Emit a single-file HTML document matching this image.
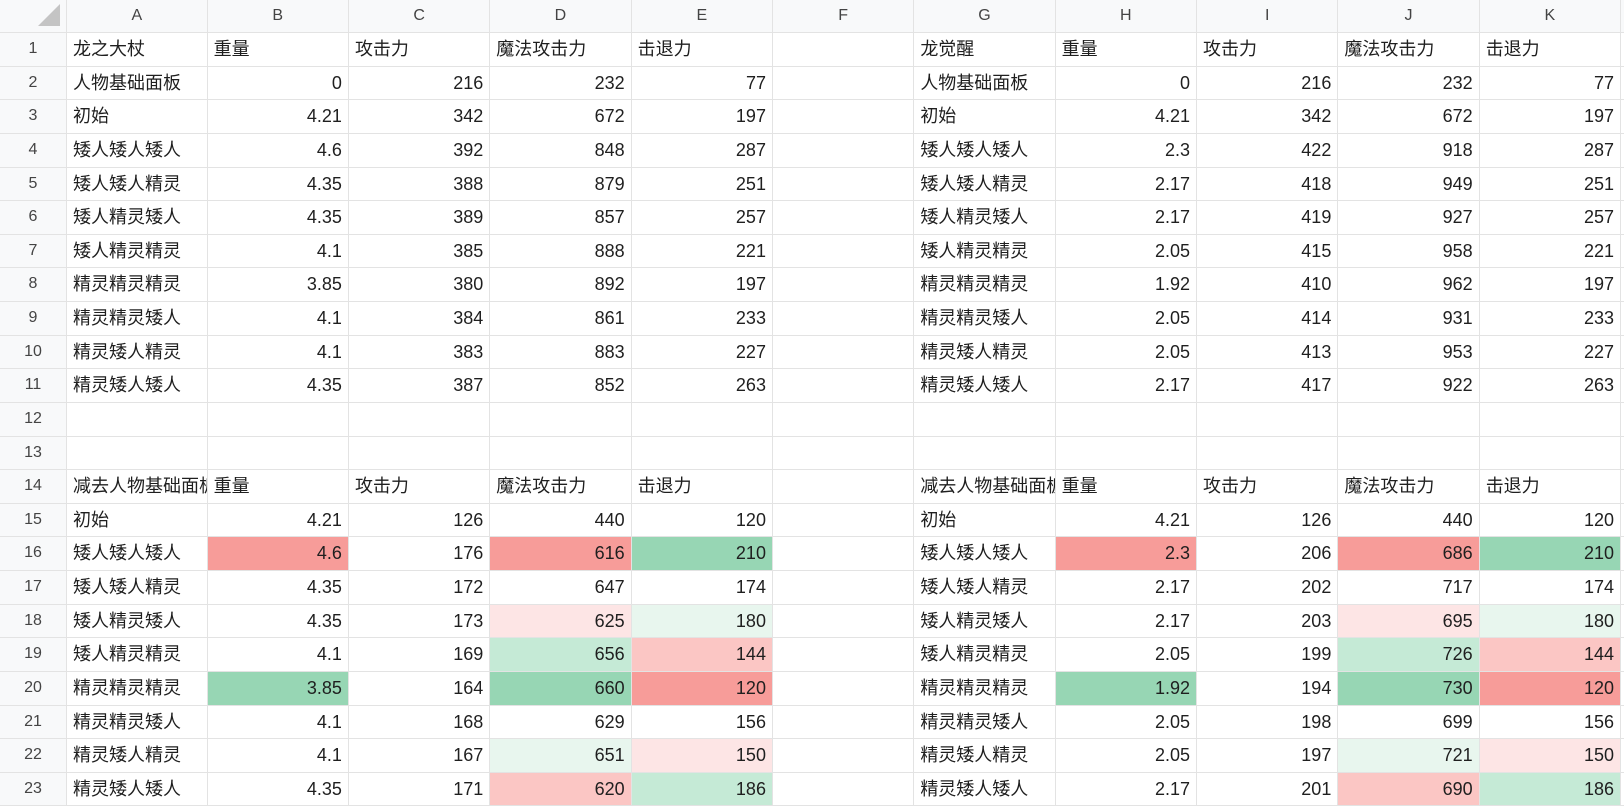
<!DOCTYPE html>
<html><head><meta charset="utf-8"><style>
*{box-sizing:border-box;margin:0;padding:0}
body{width:1624px;height:807px;overflow:hidden;background:#fff;font-family:"Liberation Sans","Noto Sans CJK SC",sans-serif;color:#1f1f1f;position:relative}
.row{position:absolute;left:0;width:1624px;height:33.63px;display:flex}
.row>div{height:100%;border-right:1px solid #e3e3e3;border-bottom:1px solid #e3e3e3;overflow:hidden;white-space:nowrap;font-size:18px;line-height:32px;padding:0 6px;flex:none}
.row>div:nth-child(1){width:67px;background:#f8f9fa;text-align:center;font-size:16px;color:#444;padding:0}
.row>div:nth-child(2){width:140.6px}
.row>div:nth-child(n+3){width:141.35px}
.row>div:last-child{flex:1;border-right:none}
.r{text-align:right}
.hd>div{background:#f8f9fa;text-align:center;font-size:16px;color:#444;line-height:32px}
.R{background:#f79c99}.r2{background:#fbc6c4}.r3{background:#fde5e5}
.G{background:#97d6b4}.g2{background:#c5ead6}.g3{background:#e8f6ee}
.corner{position:relative}
.corner:after{content:"";position:absolute;right:6px;bottom:6px;width:0;height:0;border-left:22px solid transparent;border-bottom:22px solid #c4c4c4}
</style></head><body>
<div class="row hd" style="top:0;height:33px"><div class="corner"></div><div>A</div><div>B</div><div>C</div><div>D</div><div>E</div><div>F</div><div>G</div><div>H</div><div>I</div><div>J</div><div>K</div><div></div></div>

<div class="row" style="top:33px"><div>1</div><div>龙之大杖</div><div>重量</div><div>攻击力</div><div>魔法攻击力</div><div>击退力</div><div></div><div>龙觉醒</div><div>重量</div><div>攻击力</div><div>魔法攻击力</div><div>击退力</div><div></div></div>
<div class="row" style="top:66.63px"><div>2</div><div>人物基础面板</div><div class="r">0</div><div class="r">216</div><div class="r">232</div><div class="r">77</div><div></div><div>人物基础面板</div><div class="r">0</div><div class="r">216</div><div class="r">232</div><div class="r">77</div><div></div></div>
<div class="row" style="top:100.26px"><div>3</div><div>初始</div><div class="r">4.21</div><div class="r">342</div><div class="r">672</div><div class="r">197</div><div></div><div>初始</div><div class="r">4.21</div><div class="r">342</div><div class="r">672</div><div class="r">197</div><div></div></div>
<div class="row" style="top:133.89px"><div>4</div><div>矮人矮人矮人</div><div class="r">4.6</div><div class="r">392</div><div class="r">848</div><div class="r">287</div><div></div><div>矮人矮人矮人</div><div class="r">2.3</div><div class="r">422</div><div class="r">918</div><div class="r">287</div><div></div></div>
<div class="row" style="top:167.52px"><div>5</div><div>矮人矮人精灵</div><div class="r">4.35</div><div class="r">388</div><div class="r">879</div><div class="r">251</div><div></div><div>矮人矮人精灵</div><div class="r">2.17</div><div class="r">418</div><div class="r">949</div><div class="r">251</div><div></div></div>
<div class="row" style="top:201.15px"><div>6</div><div>矮人精灵矮人</div><div class="r">4.35</div><div class="r">389</div><div class="r">857</div><div class="r">257</div><div></div><div>矮人精灵矮人</div><div class="r">2.17</div><div class="r">419</div><div class="r">927</div><div class="r">257</div><div></div></div>
<div class="row" style="top:234.78px"><div>7</div><div>矮人精灵精灵</div><div class="r">4.1</div><div class="r">385</div><div class="r">888</div><div class="r">221</div><div></div><div>矮人精灵精灵</div><div class="r">2.05</div><div class="r">415</div><div class="r">958</div><div class="r">221</div><div></div></div>
<div class="row" style="top:268.41px"><div>8</div><div>精灵精灵精灵</div><div class="r">3.85</div><div class="r">380</div><div class="r">892</div><div class="r">197</div><div></div><div>精灵精灵精灵</div><div class="r">1.92</div><div class="r">410</div><div class="r">962</div><div class="r">197</div><div></div></div>
<div class="row" style="top:302.04px"><div>9</div><div>精灵精灵矮人</div><div class="r">4.1</div><div class="r">384</div><div class="r">861</div><div class="r">233</div><div></div><div>精灵精灵矮人</div><div class="r">2.05</div><div class="r">414</div><div class="r">931</div><div class="r">233</div><div></div></div>
<div class="row" style="top:335.67px"><div>10</div><div>精灵矮人精灵</div><div class="r">4.1</div><div class="r">383</div><div class="r">883</div><div class="r">227</div><div></div><div>精灵矮人精灵</div><div class="r">2.05</div><div class="r">413</div><div class="r">953</div><div class="r">227</div><div></div></div>
<div class="row" style="top:369.3px"><div>11</div><div>精灵矮人矮人</div><div class="r">4.35</div><div class="r">387</div><div class="r">852</div><div class="r">263</div><div></div><div>精灵矮人矮人</div><div class="r">2.17</div><div class="r">417</div><div class="r">922</div><div class="r">263</div><div></div></div>
<div class="row" style="top:402.93px"><div>12</div><div></div><div></div><div></div><div></div><div></div><div></div><div></div><div></div><div></div><div></div><div></div><div></div></div>
<div class="row" style="top:436.56px"><div>13</div><div></div><div></div><div></div><div></div><div></div><div></div><div></div><div></div><div></div><div></div><div></div><div></div></div>
<div class="row" style="top:470.19px"><div>14</div><div>减去人物基础面板</div><div>重量</div><div>攻击力</div><div>魔法攻击力</div><div>击退力</div><div></div><div>减去人物基础面板</div><div>重量</div><div>攻击力</div><div>魔法攻击力</div><div>击退力</div><div></div></div>
<div class="row" style="top:503.82px"><div>15</div><div>初始</div><div class="r">4.21</div><div class="r">126</div><div class="r">440</div><div class="r">120</div><div></div><div>初始</div><div class="r">4.21</div><div class="r">126</div><div class="r">440</div><div class="r">120</div><div></div></div>
<div class="row" style="top:537.45px"><div>16</div><div>矮人矮人矮人</div><div class="r R">4.6</div><div class="r">176</div><div class="r R">616</div><div class="r G">210</div><div></div><div>矮人矮人矮人</div><div class="r R">2.3</div><div class="r">206</div><div class="r R">686</div><div class="r G">210</div><div></div></div>
<div class="row" style="top:571.08px"><div>17</div><div>矮人矮人精灵</div><div class="r">4.35</div><div class="r">172</div><div class="r">647</div><div class="r">174</div><div></div><div>矮人矮人精灵</div><div class="r">2.17</div><div class="r">202</div><div class="r">717</div><div class="r">174</div><div></div></div>
<div class="row" style="top:604.71px"><div>18</div><div>矮人精灵矮人</div><div class="r">4.35</div><div class="r">173</div><div class="r r3">625</div><div class="r g3">180</div><div></div><div>矮人精灵矮人</div><div class="r">2.17</div><div class="r">203</div><div class="r r3">695</div><div class="r g3">180</div><div></div></div>
<div class="row" style="top:638.34px"><div>19</div><div>矮人精灵精灵</div><div class="r">4.1</div><div class="r">169</div><div class="r g2">656</div><div class="r r2">144</div><div></div><div>矮人精灵精灵</div><div class="r">2.05</div><div class="r">199</div><div class="r g2">726</div><div class="r r2">144</div><div></div></div>
<div class="row" style="top:671.97px"><div>20</div><div>精灵精灵精灵</div><div class="r G">3.85</div><div class="r">164</div><div class="r G">660</div><div class="r R">120</div><div></div><div>精灵精灵精灵</div><div class="r G">1.92</div><div class="r">194</div><div class="r G">730</div><div class="r R">120</div><div></div></div>
<div class="row" style="top:705.6px"><div>21</div><div>精灵精灵矮人</div><div class="r">4.1</div><div class="r">168</div><div class="r">629</div><div class="r">156</div><div></div><div>精灵精灵矮人</div><div class="r">2.05</div><div class="r">198</div><div class="r">699</div><div class="r">156</div><div></div></div>
<div class="row" style="top:739.23px"><div>22</div><div>精灵矮人精灵</div><div class="r">4.1</div><div class="r">167</div><div class="r g3">651</div><div class="r r3">150</div><div></div><div>精灵矮人精灵</div><div class="r">2.05</div><div class="r">197</div><div class="r g3">721</div><div class="r r3">150</div><div></div></div>
<div class="row" style="top:772.86px"><div>23</div><div>精灵矮人矮人</div><div class="r">4.35</div><div class="r">171</div><div class="r r2">620</div><div class="r g2">186</div><div></div><div>精灵矮人矮人</div><div class="r">2.17</div><div class="r">201</div><div class="r r2">690</div><div class="r g2">186</div><div></div></div>
</body></html>
